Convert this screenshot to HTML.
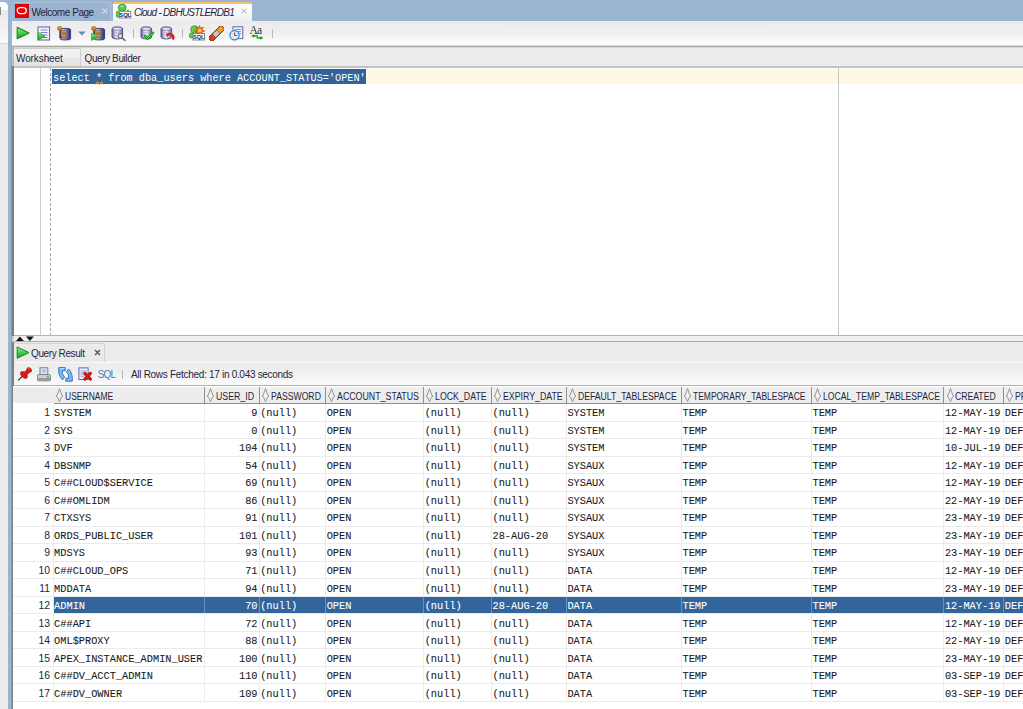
<!DOCTYPE html>
<html><head><meta charset="utf-8">
<style>
*{box-sizing:border-box;margin:0;padding:0}
html,body{width:1023px;height:709px;overflow:hidden;background:#9bb4d1;font-family:"Liberation Sans",sans-serif;position:relative}
.abs{position:absolute}
#leftp{left:0;top:2px;width:8px;height:707px;background:#ececec;border-top-right-radius:5px}
#leftp .hi{left:0;top:0;width:8px;height:42px;background:linear-gradient(#fefefe 0,#fefefe 19%,#e9e9e9 20%,#f9f9f9 97%,#d8d8d8 97%);border-top-right-radius:5px}
#leftp .blk{left:0;top:5px;width:1px;height:8px;background:#8a8a8a}
#main{left:12px;top:21px;width:1011px;height:688px;background:#ececec}
/* tabs */
#tabw{left:12px;top:2px;width:99px;height:19px;background:#9ab3d0;border:1px solid #aec2da;border-bottom:none;border-radius:2px 2px 0 0}
#tabc{left:113px;top:2px;width:139px;height:19px;background:linear-gradient(#fefefe 0,#f8f8f8 50%,#efefef 100%);border-top:2px solid #f8c06a;border-radius:2px 2px 0 0}
.tt{font-size:10px;color:#1e2540;white-space:nowrap;line-height:12px}
/* toolbar */
#tb{left:12px;top:21px;width:1011px;height:25px;background:linear-gradient(#ebebeb 0%,#efefef 45%,#fafafa 85%,#fcfcfc 100%)}
#tbl{left:12px;top:45px;width:1011px;height:3px;background:linear-gradient(#dcdcdc 0,#dcdcdc 33.3%,#a8a8a8 33.3%,#a8a8a8 66.6%,#d6d6d6 66.6%)}
.sep{width:1px;height:9px;background:#b8b8b8;top:29px}
/* worksheet tabs */
#tabws{left:13px;top:48px;width:68px;height:18px;background:linear-gradient(#f2f2f2 0,#f0f0f0 50%,#e6e6e6 51%,#e3e3e3 100%);border:1px solid #d0d0d0;border-bottom:none;border-radius:2px 2px 0 0}
#edtop{left:13px;top:66px;width:1010px;height:2px;background:#c2c2c2}
#editor{left:13px;top:68px;width:1010px;height:267px;background:#fff}
#gline{left:40px;top:68px;width:1px;height:267px;background:#cdcdcd}
#dline{left:50px;top:68px;width:1px;height:267px;background:repeating-linear-gradient(#a8a8a8 0 3px,transparent 3px 5px)}
#curline{left:51px;top:69px;width:972px;height:15px;background:#fef7e2}
#sel{left:52px;top:69px;width:314px;height:15px;background:#30649b}
#margin{left:838px;top:68px;width:1px;height:267px;background:#c8c8c8}
.code{font-family:"Liberation Mono",monospace;font-size:10.22px;white-space:pre;color:#fff;line-height:15px}
#leftborder{left:11px;top:66px;width:3px;height:643px;background:linear-gradient(90deg,#949494 0,#949494 33%,#828282 33%,#7c7c7c 100%)}
#leftborder2{left:11px;top:47px;width:3px;height:19px;background:linear-gradient(90deg,#a8a8a8 0,#a8a8a8 33%,#bdbdbd 33%)}
#leftborder0{left:11px;top:21px;width:1px;height:26px;background:#a9b4c2}
#leftborder3{left:11px;top:336px;width:3px;height:6px;background:linear-gradient(90deg,#a0a0a0 0,#a0a0a0 33%,#cfcfcf 33%)}
#edbot{left:13px;top:335px;width:1010px;height:1px;background:#b4b4b4}
#split{left:13px;top:336px;width:1010px;height:5px;background:#f0f0f0}
#splitl{left:13px;top:341px;width:1010px;height:1px;background:#a9a9a9}
#qrtab{left:13px;top:343px;width:92px;height:19px;background:linear-gradient(#ebebeb,#e9e9e9);border:1px solid #d4d4d4;border-bottom:none;border-left:none;border-radius:0 2px 0 0}
#rtb{left:13px;top:362px;width:1010px;height:23px;background:linear-gradient(#ececec 0%,#efefef 40%,#f8f8f8 85%,#fafafa 100%);border-top:1px solid #fbfbfb}
#rtbl{left:13px;top:385px;width:1010px;height:2px;background:linear-gradient(#b4b4b4 0,#b4b4b4 50%,#a2a2a2 50%)}
/* grid */
#grid{left:13px;top:386px;width:1010px;height:323px;background:#fff}
#ghead{left:13px;top:387px;width:1010px;height:16px;background:linear-gradient(#f3f3f3 0,#eeeeee 15%,#ececec 100%)}
#ghead2{left:13px;top:387px;width:41px;height:16px;background:#ececec}
.hsep{top:387px;width:1px;height:17px;background:#8f8f8f}
.hbot{top:403px;height:1px;background:#8f8f8f}
.sorti{top:388px}
.htxt{top:391px;font-size:10px;line-height:12px;color:#1e2540;white-space:nowrap;transform:scaleX(0.845);transform-origin:0 0}
.rline{left:13px;width:1010px;height:1px;background:#ebebeb}
.vline{top:404px;width:1px;height:298px;background:#ebebeb}
.selrow{left:54px;width:969px;background:#31659c}
.selv{width:1px;background:#6d8fb5}
.cell{font-family:"Liberation Mono",monospace;font-size:10.3px;line-height:15px;white-space:pre;color:#1a1a1a;-webkit-text-stroke:0.08px currentColor}
.cell.sel{color:#fff}
.rnum{left:13px;width:37px;text-align:right;font-size:10.4px;line-height:15px;color:#1e2540;margin-top:-1px}

</style></head><body>
<div class="abs" id="leftp"><div class="abs hi"></div><div class="abs blk"></div></div>
<div class="abs" id="main"></div>
<div class="abs" id="tabw"></div>
<div class="abs" id="tabc"></div>
<div class="abs" id="tb"></div>
<div class="abs" id="tbl"></div>
<div class="abs" id="tabws"></div>
<div class="abs" id="edtop"></div>
<div class="abs" id="editor"></div>
<div class="abs" id="curline"></div>
<div class="abs" id="gline"></div>
<div class="abs" id="dline"></div>
<div class="abs" id="margin"></div>
<div class="abs" id="sel"></div>
<div class="abs code" style="left:53px;top:70.5px">select * from dba_users where ACCOUNT_STATUS='OPEN'</div>
<svg class="abs" id="squiggle" style="left:95px;top:81px" width="9" height="4" viewBox="0 0 9 4"><path d="M0.5 3.5 L2.5 1 L4.5 3.5 L6.5 1 L8.5 3.5" stroke="#e8901c" stroke-width="1.2" fill="none"/></svg>
<div class="abs" id="edbot"></div>
<div class="abs" id="split"></div>
<div class="abs" id="splitl"></div>
<div class="abs" id="qrtab"></div>
<div class="abs" id="rtb"></div>
<div class="abs" id="rtbl"></div>
<div class="abs" id="leftborder"></div>
<div class="abs" id="leftborder2"></div>
<div class="abs" id="leftborder0"></div>
<div class="abs" id="leftborder3"></div>
<!-- tab texts -->
<div class="abs tt" style="left:31.5px;top:7px;letter-spacing:-0.45px">Welcome Page</div>
<svg class="abs" style="left:101.5px;top:8px" width="6" height="6" viewBox="0 0 6 6"><path d="M0.6 0.6 L5.4 5.4 M5.4 0.6 L0.6 5.4" stroke="#d6e0ec" stroke-width="1.1"/></svg>
<div class="abs tt" style="left:134px;top:7px;font-style:italic;letter-spacing:-0.75px">Cloud - DBHUSTLERDB1</div>
<svg class="abs" style="left:241px;top:8px" width="6" height="6" viewBox="0 0 6 6"><path d="M0.6 0.6 L5.4 5.4 M5.4 0.6 L0.6 5.4" stroke="#c0c0c0" stroke-width="1.1"/></svg>
<div class="abs tt" style="left:16px;top:53px;letter-spacing:-0.1px">Worksheet</div>
<div class="abs tt" style="left:84.5px;top:53px;letter-spacing:-0.4px">Query Builder</div>
<div class="abs tt" style="left:31px;top:348px;letter-spacing:-0.4px">Query Result</div>
<svg class="abs" style="left:93.5px;top:349px" width="7" height="7" viewBox="0 0 7 7"><path d="M1 1 L6 6 M6 1 L1 6" stroke="#555" stroke-width="1.4"/></svg>
<div class="abs tt" style="left:97.8px;top:369px;color:#4a7dc0;letter-spacing:-0.9px">SQL</div>
<div class="abs sep" style="left:122px;top:370px;height:9px"></div>
<div class="abs tt" style="left:131px;top:369px;letter-spacing:-0.3px">All Rows Fetched: 17 in 0.043 seconds</div>
<!-- toolbar separators -->
<div class="abs sep" style="left:133px"></div>
<div class="abs sep" style="left:182px"></div>
<div class="abs sep" style="left:272px"></div>
<!-- splitter arrows -->
<svg class="abs" style="left:15px;top:336px" width="20" height="6" viewBox="0 0 20 6"><path d="M1 5 L4.9 0.6 L8.8 5 Z" fill="#111"/><path d="M11 0.6 L18.8 0.6 L14.9 5 Z" fill="#111"/></svg>
<svg width="0" height="0" style="position:absolute"><defs>
<linearGradient id="gpl" x1="0" y1="0" x2="0" y2="1"><stop offset="0" stop-color="#9af09a"/><stop offset="0.5" stop-color="#45cc45"/><stop offset="1" stop-color="#1c9e1c"/></linearGradient>
<linearGradient id="gcyl" x1="0" y1="0" x2="1" y2="0"><stop offset="0" stop-color="#50538f"/><stop offset="0.3" stop-color="#c9cbe0"/><stop offset="0.55" stop-color="#e8e9f2"/><stop offset="1" stop-color="#5b5d99"/></linearGradient>
<linearGradient id="gcyld" x1="0" y1="0" x2="1" y2="0"><stop offset="0" stop-color="#5a60a0"/><stop offset="0.3" stop-color="#c4c8e6"/><stop offset="0.6" stop-color="#7078b8"/><stop offset="1" stop-color="#262a68"/></linearGradient>
<linearGradient id="gor" x1="0" y1="0" x2="0" y2="1"><stop offset="0" stop-color="#f0a860"/><stop offset="1" stop-color="#b86a28"/></linearGradient>
</defs></svg>
<!-- oracle tab icon -->
<svg class="abs" style="left:15px;top:4px" width="14" height="14" viewBox="0 0 14 14"><rect x="0" y="0" width="13.5" height="13.5" fill="#e8000c"/><rect x="0" y="0" width="13.5" height="13.5" fill="none" stroke="#c00008" stroke-width="0.8"/><rect x="2.3" y="3.6" width="9" height="6" rx="3" ry="3" fill="none" stroke="#fff6e8" stroke-width="1.3"/></svg>
<!-- cloud tab sql icon -->
<svg class="abs" style="left:116px;top:4px" width="16" height="15" viewBox="0 0 16 15"><ellipse cx="6.2" cy="3.7" rx="4" ry="3.5" fill="#56cc46" stroke="#2a9622" stroke-width="0.8"/><ellipse cx="6" cy="2.5" rx="1.8" ry="0.8" fill="#b8ecb0"/><circle cx="12" cy="6.5" r="1.1" fill="#3cb834"/><ellipse cx="2" cy="10.2" rx="1.8" ry="3.3" fill="#56cc46" stroke="#2a9622" stroke-width="0.7"/><rect x="3.6" y="7.4" width="11.2" height="6.6" fill="#fbfbfb" stroke="#8a8a8a" stroke-width="1"/><text x="9.2" y="12.9" font-family="Liberation Sans" font-size="6" font-weight="bold" fill="#1a2468" text-anchor="middle" letter-spacing="-0.2">SQL</text></svg>
<!-- toolbar icons -->
<svg class="abs" style="left:15.5px;top:26px" width="14" height="14" viewBox="0 0 14 14"><path d="M1.2 1.2 L13 7 L1.2 12.8 Z" fill="url(#gpl)" stroke="#16861a" stroke-width="1.1" stroke-linejoin="round"/></svg>
<svg class="abs" style="left:37px;top:25.5px" width="14" height="15" viewBox="0 0 14 15"><rect x="1" y="1" width="11.5" height="13" fill="#f4f4fb" stroke="#656ab0" stroke-width="1.1"/><path d="M3.5 4 H10.5 M3.5 6.5 H10.5 M3.5 9 H10.5 M3.5 11.5 H10.5" stroke="#6e78c8" stroke-width="0.9"/><path d="M1.2 6.5 L8 10.2 L1.2 14 Z" fill="url(#gpl)" stroke="#1a9a1a" stroke-width="0.8"/></svg>
<svg class="abs" style="left:56.5px;top:25.5px" width="16" height="15" viewBox="0 0 16 15"><path d="M3 3.6 Q3 2.3 8.3 2.3 Q13.6 2.3 13.6 3.6 V12.7 Q13.6 14 8.3 14 Q3 14 3 12.7 Z" fill="url(#gcyld)" stroke="#2a2c68" stroke-width="0.8"/><path d="M3 4 V11.5 H5" stroke="#333" stroke-width="0.9" fill="none"/><rect x="0.6" y="0.6" width="4.2" height="3.7" rx="1.2" fill="url(#gor)" stroke="#9a5a22" stroke-width="0.6"/><rect x="4.7" y="4.4" width="4.7" height="3" rx="1.2" fill="url(#gor)" stroke="#9a5a22" stroke-width="0.6"/><rect x="4.7" y="8.5" width="4.7" height="3.6" rx="1.2" fill="url(#gor)" stroke="#9a5a22" stroke-width="0.6"/></svg>
<svg class="abs" style="left:77.5px;top:30.5px" width="8" height="5" viewBox="0 0 8 5"><path d="M0.3 0.5 H7.5 L3.9 4.6 Z" fill="#5a8cc8"/></svg>
<svg class="abs" style="left:90.5px;top:25.5px" width="16" height="15" viewBox="0 0 16 15"><path d="M3 3.6 Q3 2.3 8.3 2.3 Q13.6 2.3 13.6 3.6 V12.7 Q13.6 14 8.3 14 Q3 14 3 12.7 Z" fill="url(#gcyld)" stroke="#2a2c68" stroke-width="0.8"/><path d="M3 4 V11.5 H5" stroke="#333" stroke-width="0.9" fill="none"/><rect x="0.6" y="0.6" width="4.2" height="3.7" rx="1.2" fill="url(#gor)" stroke="#9a5a22" stroke-width="0.6"/><rect x="4.7" y="4.4" width="4.7" height="3" rx="1.2" fill="url(#gor)" stroke="#9a5a22" stroke-width="0.6"/><rect x="4.7" y="8.5" width="4.7" height="3.6" rx="1.2" fill="url(#gor)" stroke="#9a5a22" stroke-width="0.6"/><path d="M0.5 7 L7.5 10.5 L0.5 14.5 Z" fill="url(#gpl)" stroke="#22a022" stroke-width="0.6"/></svg>
<svg class="abs" style="left:110.5px;top:25.5px" width="16" height="15" viewBox="0 0 16 15"><path d="M1 2.8 Q1 0.8 6.3 0.8 Q11.6 0.8 11.6 2.8 V11 Q11.6 13 6.3 13 Q1 13 1 11 Z" fill="url(#gcyl)" stroke="#4a4c8c" stroke-width="0.9"/><ellipse cx="6.3" cy="2.8" rx="4.6" ry="1.4" fill="#e4e6f2" stroke="#6a6ca8" stroke-width="0.6"/><path d="M1.5 6 Q6.3 7.5 11.1 6 M1.5 9 Q6.3 10.5 11.1 9" stroke="#a8aad0" stroke-width="0.6" fill="none"/><circle cx="9.3" cy="10" r="2.3" fill="#e0e0e0" stroke="#555" stroke-width="1"/><path d="M10.8 11.6 L14 14.3" stroke="#666" stroke-width="1.6" stroke-linecap="round"/></svg>
<svg class="abs" style="left:139.5px;top:25.5px" width="16" height="15" viewBox="0 0 16 15"><path d="M1 2.8 Q1 0.8 6.3 0.8 Q11.6 0.8 11.6 2.8 V11 Q11.6 13 6.3 13 Q1 13 1 11 Z" fill="url(#gcyl)" stroke="#4a4c8c" stroke-width="0.9"/><ellipse cx="6.3" cy="2.8" rx="4.6" ry="1.4" fill="#e4e6f2" stroke="#6a6ca8" stroke-width="0.6"/><path d="M1.5 6 Q6.3 7.5 11.1 6" stroke="#a8aad0" stroke-width="0.6" fill="none"/><path d="M5 10 L7.5 12.6 L13 6.8" stroke="#129a12" stroke-width="2.6" fill="none" stroke-linecap="round" stroke-linejoin="round"/><path d="M5 10 L7.5 12.6 L13 6.8" stroke="#58e058" stroke-width="1" fill="none" stroke-linecap="round"/></svg>
<svg class="abs" style="left:159.5px;top:25.5px" width="16" height="15" viewBox="0 0 16 15"><path d="M1 2.8 Q1 0.8 6.3 0.8 Q11.6 0.8 11.6 2.8 V11 Q11.6 13 6.3 13 Q1 13 1 11 Z" fill="url(#gcyl)" stroke="#4a4c8c" stroke-width="0.9"/><ellipse cx="6.3" cy="2.8" rx="4.6" ry="1.4" fill="#e4e6f2" stroke="#6a6ca8" stroke-width="0.6"/><path d="M1.5 6 Q6.3 7.5 11.1 6" stroke="#a8aad0" stroke-width="0.6" fill="none"/><path d="M7 9.5 Q9.5 6.5 12.5 9 Q14.5 11 12.5 13.5" stroke="#d82010" stroke-width="2.2" fill="none"/><path d="M5.8 7.8 L9.5 8 L7.2 11.2 Z" fill="#e02010"/></svg>
<svg class="abs" style="left:188.5px;top:25px" width="17" height="16" viewBox="0 0 17 16"><circle cx="5.5" cy="4.5" r="3.8" fill="#5fcf4a" stroke="#2f9a25" stroke-width="0.8"/><circle cx="2.8" cy="10.5" r="2.6" fill="#5fcf4a" stroke="#2f9a25" stroke-width="0.8"/><path d="M10.5 0.5 L11.5 3 L14.5 2 L13 4.8 L15.8 6 L13 7 L14 9.5 L11.5 8.3 L10.5 10.5 L9.5 8.3 L7 9.5 L8 7 L5.5 6 L8 4.8 L6.8 2 L9.5 3 Z" fill="#f07a20" stroke="#c03010" stroke-width="0.5"/><circle cx="10.8" cy="5.5" r="1.6" fill="#ffe060"/><rect x="4" y="8.5" width="11.5" height="6.5" fill="#f8f8f8" stroke="#7a7a7a" stroke-width="0.9"/><text x="9.7" y="14.2" font-family="Liberation Sans" font-size="5.6" font-weight="bold" fill="#1e2a70" text-anchor="middle">SQL</text></svg>
<svg class="abs" style="left:209px;top:25.5px" width="15" height="15" viewBox="0 0 15 15"><g transform="rotate(-45 7.5 7.5)"><rect x="-1.5" y="4.8" width="18" height="5.4" rx="1" fill="#8a8a8a" stroke="#7a3c18" stroke-width="0.9"/><rect x="-1.5" y="4.8" width="6" height="5.4" fill="#d8401a"/><rect x="4.5" y="5.3" width="5" height="4.4" fill="#c8c8c8"/><rect x="10.5" y="4.8" width="6" height="5.4" fill="#f0a020"/><rect x="-1.5" y="4.8" width="18" height="5.4" rx="1" fill="none" stroke="#7a3c18" stroke-width="0.9"/></g></svg>
<svg class="abs" style="left:229px;top:25.5px" width="15" height="15" viewBox="0 0 15 15"><rect x="4" y="0.8" width="9.8" height="11.8" fill="#f2f2fa" stroke="#6066b0" stroke-width="1"/><path d="M6 3.5 H12 M6 5.5 H12 M6 7.5 H12" stroke="#8088cc" stroke-width="0.9"/><circle cx="5.5" cy="9.3" r="4.6" fill="#d6ecfb" stroke="#3a86d6" stroke-width="1.3"/><path d="M5.5 6.5 V9.5 H7.8" stroke="#b02020" stroke-width="0.9" fill="none"/></svg>
<svg class="abs" style="left:249px;top:24px" width="16" height="17" viewBox="0 0 16 17"><text x="0.6" y="9.8" font-family="Liberation Serif" font-size="11.5" fill="#303030" letter-spacing="-0.8">Aa</text><path d="M4 11.9 H9" stroke="#14a014" stroke-width="1.5"/><path d="M2.3 11.9 L5.2 10 V13.8 Z" fill="#14a014"/><path d="M7.5 13.9 H12.5" stroke="#14a014" stroke-width="1.5"/><path d="M14.3 13.9 L11.4 12 V15.8 Z" fill="#14a014"/></svg>
<!-- query result tab play -->
<svg class="abs" style="left:15.5px;top:346px" width="14" height="13" viewBox="0 0 14 13"><path d="M1.2 1 L13 6.6 L1.2 12.2 Z" fill="url(#gpl)" stroke="#16861a" stroke-width="1" stroke-linejoin="round"/></svg>
<!-- result toolbar icons -->
<svg class="abs" style="left:17px;top:366px" width="16" height="16" viewBox="0 0 16 16"><path d="M1.5 14 L5.5 10.3" stroke="#4a4a4a" stroke-width="1.3" stroke-linecap="round"/><path d="M3.5 6.5 Q5.5 4.8 7.5 6 L10 3.5 Q9.8 1.8 11.5 1.5 Q14.8 2 14.5 5 Q14 6.5 12.5 6.2 L10 8.8 Q11 10.8 9.5 12.3 Q7.5 13 5.5 11 Q3 8.8 3.5 6.5 Z" fill="#dc1a12" stroke="#9a0c08" stroke-width="0.7"/><path d="M11 2.5 Q13 2.3 13.2 3.5" stroke="#f07050" stroke-width="0.8" fill="none"/></svg>
<svg class="abs" style="left:37px;top:366.5px" width="15" height="15" viewBox="0 0 15 15"><rect x="3" y="0.8" width="7.8" height="7.2" fill="#eceef8" stroke="#6878b8" stroke-width="1"/><path d="M4.6 3 H9.2 M4.6 5 H9.2" stroke="#8a94d4" stroke-width="0.9"/><path d="M1.8 7.5 H12.2 Q13.6 7.5 13.6 9.3 V12.6 Q13.6 13.8 12.4 13.8 H1.6 Q0.4 13.8 0.4 12.6 V9.3 Q0.4 7.5 1.8 7.5 Z" fill="#cfcfcf" stroke="#6c6c6c" stroke-width="0.8"/><rect x="1" y="11" width="12" height="2.3" fill="#9a9a9a"/><rect x="9.8" y="9.3" width="2.3" height="1.3" fill="#28c028"/></svg>
<svg class="abs" style="left:57.5px;top:366.5px" width="15" height="15" viewBox="0 0 15 15"><path d="M0.7 0.6 H7.2 V3.6 H4.2 Q3.6 7.2 6.6 10.2 L4.4 12.8 Q0 8.5 0.7 0.6 Z" fill="#78bcf0" stroke="#2a68bc" stroke-width="0.9" stroke-linejoin="round"/><path d="M14.3 14.2 H7.8 V11.2 H10.8 Q11.4 7.6 8.4 4.6 L10.6 2 Q15 6.3 14.3 14.2 Z" fill="#78bcf0" stroke="#2a68bc" stroke-width="0.9" stroke-linejoin="round"/><path d="M1.8 1.6 H6.2" stroke="#c8e6fc" stroke-width="0.8"/></svg>
<svg class="abs" style="left:77.5px;top:366.5px" width="15" height="15" viewBox="0 0 15 15"><rect x="0.9" y="0.9" width="9.2" height="11.6" fill="#f2f2fa" stroke="#6066b0" stroke-width="1"/><path d="M2.5 3.8 H8.5 M2.5 5.8 H8.5 M2.5 7.8 H8.5 M2.5 9.8 H6" stroke="#8088cc" stroke-width="0.8"/><path d="M7 6.5 L12.3 12 M12.3 6.5 L7 12" stroke="#9a0808" stroke-width="3.2" stroke-linecap="round"/><path d="M7 6.5 L12.3 12 M12.3 6.5 L7 12" stroke="#f01818" stroke-width="1.8" stroke-linecap="round"/></svg>
<div class="abs" id="grid"></div>
<div class="abs" id="ghead"></div>
<div class="abs" id="ghead2"></div>
<div class="abs hsep" style="left:204px"></div>
<div class="abs hbot" style="left:54px;width:150px"></div>
<svg class="abs sorti" style="left:55.1px" width="9" height="15" viewBox="-1 0 9 15"><path d="M3.5 0.6 L5.8 7.2 L7 8.1 L5.6 8.8 L3.5 13.6 L1.4 8.8 L0 8.1 L1.2 7.2 Z" fill="#f2f2f2" stroke="#8c8c8c" stroke-width="0.9" stroke-linejoin="round"/></svg>
<div class="abs htxt" style="left:64.8px;transform:scaleX(0.852)">USERNAME</div>
<div class="abs hsep" style="left:259px"></div>
<div class="abs hbot" style="left:205px;width:54px"></div>
<svg class="abs sorti" style="left:206.1px" width="9" height="15" viewBox="-1 0 9 15"><path d="M3.5 0.6 L5.8 7.2 L7 8.1 L5.6 8.8 L3.5 13.6 L1.4 8.8 L0 8.1 L1.2 7.2 Z" fill="#f2f2f2" stroke="#8c8c8c" stroke-width="0.9" stroke-linejoin="round"/></svg>
<div class="abs htxt" style="left:215.8px;transform:scaleX(0.876)">USER_ID</div>
<div class="abs hsep" style="left:325px"></div>
<div class="abs hbot" style="left:260px;width:65px"></div>
<svg class="abs sorti" style="left:260.8px" width="9" height="15" viewBox="-1 0 9 15"><path d="M3.5 0.6 L5.8 7.2 L7 8.1 L5.6 8.8 L3.5 13.6 L1.4 8.8 L0 8.1 L1.2 7.2 Z" fill="#f2f2f2" stroke="#8c8c8c" stroke-width="0.9" stroke-linejoin="round"/></svg>
<div class="abs htxt" style="left:270.5px;transform:scaleX(0.866)">PASSWORD</div>
<div class="abs hsep" style="left:423px"></div>
<div class="abs hbot" style="left:326px;width:97px"></div>
<svg class="abs sorti" style="left:327.3px" width="9" height="15" viewBox="-1 0 9 15"><path d="M3.5 0.6 L5.8 7.2 L7 8.1 L5.6 8.8 L3.5 13.6 L1.4 8.8 L0 8.1 L1.2 7.2 Z" fill="#f2f2f2" stroke="#8c8c8c" stroke-width="0.9" stroke-linejoin="round"/></svg>
<div class="abs htxt" style="left:337.0px;transform:scaleX(0.882)">ACCOUNT_STATUS</div>
<div class="abs hsep" style="left:491px"></div>
<div class="abs hbot" style="left:424px;width:67px"></div>
<svg class="abs sorti" style="left:425.3px" width="9" height="15" viewBox="-1 0 9 15"><path d="M3.5 0.6 L5.8 7.2 L7 8.1 L5.6 8.8 L3.5 13.6 L1.4 8.8 L0 8.1 L1.2 7.2 Z" fill="#f2f2f2" stroke="#8c8c8c" stroke-width="0.9" stroke-linejoin="round"/></svg>
<div class="abs htxt" style="left:435.0px;transform:scaleX(0.879)">LOCK_DATE</div>
<div class="abs hsep" style="left:566px"></div>
<div class="abs hbot" style="left:492px;width:74px"></div>
<svg class="abs sorti" style="left:493.1px" width="9" height="15" viewBox="-1 0 9 15"><path d="M3.5 0.6 L5.8 7.2 L7 8.1 L5.6 8.8 L3.5 13.6 L1.4 8.8 L0 8.1 L1.2 7.2 Z" fill="#f2f2f2" stroke="#8c8c8c" stroke-width="0.9" stroke-linejoin="round"/></svg>
<div class="abs htxt" style="left:502.8px;transform:scaleX(0.878)">EXPIRY_DATE</div>
<div class="abs hsep" style="left:681px"></div>
<div class="abs hbot" style="left:567px;width:114px"></div>
<svg class="abs sorti" style="left:568.0px" width="9" height="15" viewBox="-1 0 9 15"><path d="M3.5 0.6 L5.8 7.2 L7 8.1 L5.6 8.8 L3.5 13.6 L1.4 8.8 L0 8.1 L1.2 7.2 Z" fill="#f2f2f2" stroke="#8c8c8c" stroke-width="0.9" stroke-linejoin="round"/></svg>
<div class="abs htxt" style="left:577.7px;transform:scaleX(0.866)">DEFAULT_TABLESPACE</div>
<div class="abs hsep" style="left:811px"></div>
<div class="abs hbot" style="left:682px;width:129px"></div>
<svg class="abs sorti" style="left:683.1px" width="9" height="15" viewBox="-1 0 9 15"><path d="M3.5 0.6 L5.8 7.2 L7 8.1 L5.6 8.8 L3.5 13.6 L1.4 8.8 L0 8.1 L1.2 7.2 Z" fill="#f2f2f2" stroke="#8c8c8c" stroke-width="0.9" stroke-linejoin="round"/></svg>
<div class="abs htxt" style="left:692.8px;transform:scaleX(0.847)">TEMPORARY_TABLESPACE</div>
<div class="abs hsep" style="left:943px"></div>
<div class="abs hbot" style="left:812px;width:131px"></div>
<svg class="abs sorti" style="left:813.1px" width="9" height="15" viewBox="-1 0 9 15"><path d="M3.5 0.6 L5.8 7.2 L7 8.1 L5.6 8.8 L3.5 13.6 L1.4 8.8 L0 8.1 L1.2 7.2 Z" fill="#f2f2f2" stroke="#8c8c8c" stroke-width="0.9" stroke-linejoin="round"/></svg>
<div class="abs htxt" style="left:822.8px;transform:scaleX(0.861)">LOCAL_TEMP_TABLESPACE</div>
<div class="abs hsep" style="left:1003px"></div>
<div class="abs hbot" style="left:944px;width:59px"></div>
<svg class="abs sorti" style="left:945.5px" width="9" height="15" viewBox="-1 0 9 15"><path d="M3.5 0.6 L5.8 7.2 L7 8.1 L5.6 8.8 L3.5 13.6 L1.4 8.8 L0 8.1 L1.2 7.2 Z" fill="#f2f2f2" stroke="#8c8c8c" stroke-width="0.9" stroke-linejoin="round"/></svg>
<div class="abs htxt" style="left:955.2px;transform:scaleX(0.864)">CREATED</div>
<div class="abs hsep" style="left:1100px"></div>
<div class="abs hbot" style="left:1004px;width:96px"></div>
<svg class="abs sorti" style="left:1005.4px" width="9" height="15" viewBox="-1 0 9 15"><path d="M3.5 0.6 L5.8 7.2 L7 8.1 L5.6 8.8 L3.5 13.6 L1.4 8.8 L0 8.1 L1.2 7.2 Z" fill="#f2f2f2" stroke="#8c8c8c" stroke-width="0.9" stroke-linejoin="round"/></svg>
<div class="abs htxt" style="left:1015.1px;transform:scaleX(0.855)">PROFILE</div>
<div class="abs rline" style="top:421px"></div>
<div class="abs rline" style="top:438px"></div>
<div class="abs rline" style="top:456px"></div>
<div class="abs rline" style="top:473px"></div>
<div class="abs rline" style="top:491px"></div>
<div class="abs rline" style="top:508px"></div>
<div class="abs rline" style="top:526px"></div>
<div class="abs rline" style="top:543px"></div>
<div class="abs rline" style="top:561px"></div>
<div class="abs rline" style="top:578px"></div>
<div class="abs rline" style="top:596px"></div>
<div class="abs rline" style="top:613px"></div>
<div class="abs rline" style="top:631px"></div>
<div class="abs rline" style="top:648px"></div>
<div class="abs rline" style="top:666px"></div>
<div class="abs rline" style="top:683px"></div>
<div class="abs rline" style="top:701px"></div>
<div class="abs vline" style="left:53px"></div>
<div class="abs vline" style="left:204px"></div>
<div class="abs vline" style="left:259px"></div>
<div class="abs vline" style="left:325px"></div>
<div class="abs vline" style="left:423px"></div>
<div class="abs vline" style="left:491px"></div>
<div class="abs vline" style="left:566px"></div>
<div class="abs vline" style="left:681px"></div>
<div class="abs vline" style="left:811px"></div>
<div class="abs vline" style="left:943px"></div>
<div class="abs vline" style="left:1003px"></div>
<div class="abs selrow" style="top:597px;height:16px"></div>
<div class="abs selv" style="left:204px;top:597px;height:16px"></div>
<div class="abs selv" style="left:259px;top:597px;height:16px"></div>
<div class="abs selv" style="left:325px;top:597px;height:16px"></div>
<div class="abs selv" style="left:423px;top:597px;height:16px"></div>
<div class="abs selv" style="left:491px;top:597px;height:16px"></div>
<div class="abs selv" style="left:566px;top:597px;height:16px"></div>
<div class="abs selv" style="left:681px;top:597px;height:16px"></div>
<div class="abs selv" style="left:811px;top:597px;height:16px"></div>
<div class="abs selv" style="left:943px;top:597px;height:16px"></div>
<div class="abs selv" style="left:1003px;top:597px;height:16px"></div>
<div class="abs rnum" style="top:406px">1</div>
<div class="abs cell" style="top:406px;left:54.1px">SYSTEM</div>
<div class="abs cell" style="top:406px;left:204px;width:53.5px;text-align:right">9</div>
<div class="abs cell" style="top:406px;left:260.2px">(null)</div>
<div class="abs cell" style="top:406px;left:326.7px">OPEN</div>
<div class="abs cell" style="top:406px;left:424.7px">(null)</div>
<div class="abs cell" style="top:406px;left:492.5px">(null)</div>
<div class="abs cell" style="top:406px;left:567.4px">SYSTEM</div>
<div class="abs cell" style="top:406px;left:682.5px">TEMP</div>
<div class="abs cell" style="top:406px;left:812.5px">TEMP</div>
<div class="abs cell" style="top:406px;left:944.9px">12-MAY-19</div>
<div class="abs cell" style="top:406px;left:1004.8px">DEFAULT</div>
<div class="abs rnum" style="top:424px">2</div>
<div class="abs cell" style="top:424px;left:54.1px">SYS</div>
<div class="abs cell" style="top:424px;left:204px;width:53.5px;text-align:right">0</div>
<div class="abs cell" style="top:424px;left:260.2px">(null)</div>
<div class="abs cell" style="top:424px;left:326.7px">OPEN</div>
<div class="abs cell" style="top:424px;left:424.7px">(null)</div>
<div class="abs cell" style="top:424px;left:492.5px">(null)</div>
<div class="abs cell" style="top:424px;left:567.4px">SYSTEM</div>
<div class="abs cell" style="top:424px;left:682.5px">TEMP</div>
<div class="abs cell" style="top:424px;left:812.5px">TEMP</div>
<div class="abs cell" style="top:424px;left:944.9px">12-MAY-19</div>
<div class="abs cell" style="top:424px;left:1004.8px">DEFAULT</div>
<div class="abs rnum" style="top:441px">3</div>
<div class="abs cell" style="top:441px;left:54.1px">DVF</div>
<div class="abs cell" style="top:441px;left:204px;width:53.5px;text-align:right">104</div>
<div class="abs cell" style="top:441px;left:260.2px">(null)</div>
<div class="abs cell" style="top:441px;left:326.7px">OPEN</div>
<div class="abs cell" style="top:441px;left:424.7px">(null)</div>
<div class="abs cell" style="top:441px;left:492.5px">(null)</div>
<div class="abs cell" style="top:441px;left:567.4px">SYSTEM</div>
<div class="abs cell" style="top:441px;left:682.5px">TEMP</div>
<div class="abs cell" style="top:441px;left:812.5px">TEMP</div>
<div class="abs cell" style="top:441px;left:944.9px">10-JUL-19</div>
<div class="abs cell" style="top:441px;left:1004.8px">DEFAULT</div>
<div class="abs rnum" style="top:459px">4</div>
<div class="abs cell" style="top:459px;left:54.1px">DBSNMP</div>
<div class="abs cell" style="top:459px;left:204px;width:53.5px;text-align:right">54</div>
<div class="abs cell" style="top:459px;left:260.2px">(null)</div>
<div class="abs cell" style="top:459px;left:326.7px">OPEN</div>
<div class="abs cell" style="top:459px;left:424.7px">(null)</div>
<div class="abs cell" style="top:459px;left:492.5px">(null)</div>
<div class="abs cell" style="top:459px;left:567.4px">SYSAUX</div>
<div class="abs cell" style="top:459px;left:682.5px">TEMP</div>
<div class="abs cell" style="top:459px;left:812.5px">TEMP</div>
<div class="abs cell" style="top:459px;left:944.9px">12-MAY-19</div>
<div class="abs cell" style="top:459px;left:1004.8px">DEFAULT</div>
<div class="abs rnum" style="top:476px">5</div>
<div class="abs cell" style="top:476px;left:54.1px">C##CLOUD$SERVICE</div>
<div class="abs cell" style="top:476px;left:204px;width:53.5px;text-align:right">69</div>
<div class="abs cell" style="top:476px;left:260.2px">(null)</div>
<div class="abs cell" style="top:476px;left:326.7px">OPEN</div>
<div class="abs cell" style="top:476px;left:424.7px">(null)</div>
<div class="abs cell" style="top:476px;left:492.5px">(null)</div>
<div class="abs cell" style="top:476px;left:567.4px">SYSAUX</div>
<div class="abs cell" style="top:476px;left:682.5px">TEMP</div>
<div class="abs cell" style="top:476px;left:812.5px">TEMP</div>
<div class="abs cell" style="top:476px;left:944.9px">12-MAY-19</div>
<div class="abs cell" style="top:476px;left:1004.8px">DEFAULT</div>
<div class="abs rnum" style="top:494px">6</div>
<div class="abs cell" style="top:494px;left:54.1px">C##OMLIDM</div>
<div class="abs cell" style="top:494px;left:204px;width:53.5px;text-align:right">86</div>
<div class="abs cell" style="top:494px;left:260.2px">(null)</div>
<div class="abs cell" style="top:494px;left:326.7px">OPEN</div>
<div class="abs cell" style="top:494px;left:424.7px">(null)</div>
<div class="abs cell" style="top:494px;left:492.5px">(null)</div>
<div class="abs cell" style="top:494px;left:567.4px">SYSAUX</div>
<div class="abs cell" style="top:494px;left:682.5px">TEMP</div>
<div class="abs cell" style="top:494px;left:812.5px">TEMP</div>
<div class="abs cell" style="top:494px;left:944.9px">22-MAY-19</div>
<div class="abs cell" style="top:494px;left:1004.8px">DEFAULT</div>
<div class="abs rnum" style="top:511px">7</div>
<div class="abs cell" style="top:511px;left:54.1px">CTXSYS</div>
<div class="abs cell" style="top:511px;left:204px;width:53.5px;text-align:right">91</div>
<div class="abs cell" style="top:511px;left:260.2px">(null)</div>
<div class="abs cell" style="top:511px;left:326.7px">OPEN</div>
<div class="abs cell" style="top:511px;left:424.7px">(null)</div>
<div class="abs cell" style="top:511px;left:492.5px">(null)</div>
<div class="abs cell" style="top:511px;left:567.4px">SYSAUX</div>
<div class="abs cell" style="top:511px;left:682.5px">TEMP</div>
<div class="abs cell" style="top:511px;left:812.5px">TEMP</div>
<div class="abs cell" style="top:511px;left:944.9px">23-MAY-19</div>
<div class="abs cell" style="top:511px;left:1004.8px">DEFAULT</div>
<div class="abs rnum" style="top:529px">8</div>
<div class="abs cell" style="top:529px;left:54.1px">ORDS_PUBLIC_USER</div>
<div class="abs cell" style="top:529px;left:204px;width:53.5px;text-align:right">101</div>
<div class="abs cell" style="top:529px;left:260.2px">(null)</div>
<div class="abs cell" style="top:529px;left:326.7px">OPEN</div>
<div class="abs cell" style="top:529px;left:424.7px">(null)</div>
<div class="abs cell" style="top:529px;left:492.5px">28-AUG-20</div>
<div class="abs cell" style="top:529px;left:567.4px">SYSAUX</div>
<div class="abs cell" style="top:529px;left:682.5px">TEMP</div>
<div class="abs cell" style="top:529px;left:812.5px">TEMP</div>
<div class="abs cell" style="top:529px;left:944.9px">23-MAY-19</div>
<div class="abs cell" style="top:529px;left:1004.8px">DEFAULT</div>
<div class="abs rnum" style="top:546px">9</div>
<div class="abs cell" style="top:546px;left:54.1px">MDSYS</div>
<div class="abs cell" style="top:546px;left:204px;width:53.5px;text-align:right">93</div>
<div class="abs cell" style="top:546px;left:260.2px">(null)</div>
<div class="abs cell" style="top:546px;left:326.7px">OPEN</div>
<div class="abs cell" style="top:546px;left:424.7px">(null)</div>
<div class="abs cell" style="top:546px;left:492.5px">(null)</div>
<div class="abs cell" style="top:546px;left:567.4px">SYSAUX</div>
<div class="abs cell" style="top:546px;left:682.5px">TEMP</div>
<div class="abs cell" style="top:546px;left:812.5px">TEMP</div>
<div class="abs cell" style="top:546px;left:944.9px">23-MAY-19</div>
<div class="abs cell" style="top:546px;left:1004.8px">DEFAULT</div>
<div class="abs rnum" style="top:564px">10</div>
<div class="abs cell" style="top:564px;left:54.1px">C##CLOUD_OPS</div>
<div class="abs cell" style="top:564px;left:204px;width:53.5px;text-align:right">71</div>
<div class="abs cell" style="top:564px;left:260.2px">(null)</div>
<div class="abs cell" style="top:564px;left:326.7px">OPEN</div>
<div class="abs cell" style="top:564px;left:424.7px">(null)</div>
<div class="abs cell" style="top:564px;left:492.5px">(null)</div>
<div class="abs cell" style="top:564px;left:567.4px">DATA</div>
<div class="abs cell" style="top:564px;left:682.5px">TEMP</div>
<div class="abs cell" style="top:564px;left:812.5px">TEMP</div>
<div class="abs cell" style="top:564px;left:944.9px">12-MAY-19</div>
<div class="abs cell" style="top:564px;left:1004.8px">DEFAULT</div>
<div class="abs rnum" style="top:582px">11</div>
<div class="abs cell" style="top:582px;left:54.1px">MDDATA</div>
<div class="abs cell" style="top:582px;left:204px;width:53.5px;text-align:right">94</div>
<div class="abs cell" style="top:582px;left:260.2px">(null)</div>
<div class="abs cell" style="top:582px;left:326.7px">OPEN</div>
<div class="abs cell" style="top:582px;left:424.7px">(null)</div>
<div class="abs cell" style="top:582px;left:492.5px">(null)</div>
<div class="abs cell" style="top:582px;left:567.4px">DATA</div>
<div class="abs cell" style="top:582px;left:682.5px">TEMP</div>
<div class="abs cell" style="top:582px;left:812.5px">TEMP</div>
<div class="abs cell" style="top:582px;left:944.9px">23-MAY-19</div>
<div class="abs cell" style="top:582px;left:1004.8px">DEFAULT</div>
<div class="abs rnum" style="top:599px">12</div>
<div class="abs cell sel" style="top:599px;left:54.1px">ADMIN</div>
<div class="abs cell sel" style="top:599px;left:204px;width:53.5px;text-align:right">70</div>
<div class="abs cell sel" style="top:599px;left:260.2px">(null)</div>
<div class="abs cell sel" style="top:599px;left:326.7px">OPEN</div>
<div class="abs cell sel" style="top:599px;left:424.7px">(null)</div>
<div class="abs cell sel" style="top:599px;left:492.5px">28-AUG-20</div>
<div class="abs cell sel" style="top:599px;left:567.4px">DATA</div>
<div class="abs cell sel" style="top:599px;left:682.5px">TEMP</div>
<div class="abs cell sel" style="top:599px;left:812.5px">TEMP</div>
<div class="abs cell sel" style="top:599px;left:944.9px">12-MAY-19</div>
<div class="abs cell sel" style="top:599px;left:1004.8px">DEFAULT</div>
<div class="abs rnum" style="top:617px">13</div>
<div class="abs cell" style="top:617px;left:54.1px">C##API</div>
<div class="abs cell" style="top:617px;left:204px;width:53.5px;text-align:right">72</div>
<div class="abs cell" style="top:617px;left:260.2px">(null)</div>
<div class="abs cell" style="top:617px;left:326.7px">OPEN</div>
<div class="abs cell" style="top:617px;left:424.7px">(null)</div>
<div class="abs cell" style="top:617px;left:492.5px">(null)</div>
<div class="abs cell" style="top:617px;left:567.4px">DATA</div>
<div class="abs cell" style="top:617px;left:682.5px">TEMP</div>
<div class="abs cell" style="top:617px;left:812.5px">TEMP</div>
<div class="abs cell" style="top:617px;left:944.9px">12-MAY-19</div>
<div class="abs cell" style="top:617px;left:1004.8px">DEFAULT</div>
<div class="abs rnum" style="top:634px">14</div>
<div class="abs cell" style="top:634px;left:54.1px">OML$PROXY</div>
<div class="abs cell" style="top:634px;left:204px;width:53.5px;text-align:right">88</div>
<div class="abs cell" style="top:634px;left:260.2px">(null)</div>
<div class="abs cell" style="top:634px;left:326.7px">OPEN</div>
<div class="abs cell" style="top:634px;left:424.7px">(null)</div>
<div class="abs cell" style="top:634px;left:492.5px">(null)</div>
<div class="abs cell" style="top:634px;left:567.4px">DATA</div>
<div class="abs cell" style="top:634px;left:682.5px">TEMP</div>
<div class="abs cell" style="top:634px;left:812.5px">TEMP</div>
<div class="abs cell" style="top:634px;left:944.9px">22-MAY-19</div>
<div class="abs cell" style="top:634px;left:1004.8px">DEFAULT</div>
<div class="abs rnum" style="top:652px">15</div>
<div class="abs cell" style="top:652px;left:54.1px">APEX_INSTANCE_ADMIN_USER</div>
<div class="abs cell" style="top:652px;left:204px;width:53.5px;text-align:right">100</div>
<div class="abs cell" style="top:652px;left:260.2px">(null)</div>
<div class="abs cell" style="top:652px;left:326.7px">OPEN</div>
<div class="abs cell" style="top:652px;left:424.7px">(null)</div>
<div class="abs cell" style="top:652px;left:492.5px">(null)</div>
<div class="abs cell" style="top:652px;left:567.4px">DATA</div>
<div class="abs cell" style="top:652px;left:682.5px">TEMP</div>
<div class="abs cell" style="top:652px;left:812.5px">TEMP</div>
<div class="abs cell" style="top:652px;left:944.9px">23-MAY-19</div>
<div class="abs cell" style="top:652px;left:1004.8px">DEFAULT</div>
<div class="abs rnum" style="top:669px">16</div>
<div class="abs cell" style="top:669px;left:54.1px">C##DV_ACCT_ADMIN</div>
<div class="abs cell" style="top:669px;left:204px;width:53.5px;text-align:right">110</div>
<div class="abs cell" style="top:669px;left:260.2px">(null)</div>
<div class="abs cell" style="top:669px;left:326.7px">OPEN</div>
<div class="abs cell" style="top:669px;left:424.7px">(null)</div>
<div class="abs cell" style="top:669px;left:492.5px">(null)</div>
<div class="abs cell" style="top:669px;left:567.4px">DATA</div>
<div class="abs cell" style="top:669px;left:682.5px">TEMP</div>
<div class="abs cell" style="top:669px;left:812.5px">TEMP</div>
<div class="abs cell" style="top:669px;left:944.9px">03-SEP-19</div>
<div class="abs cell" style="top:669px;left:1004.8px">DEFAULT</div>
<div class="abs rnum" style="top:687px">17</div>
<div class="abs cell" style="top:687px;left:54.1px">C##DV_OWNER</div>
<div class="abs cell" style="top:687px;left:204px;width:53.5px;text-align:right">109</div>
<div class="abs cell" style="top:687px;left:260.2px">(null)</div>
<div class="abs cell" style="top:687px;left:326.7px">OPEN</div>
<div class="abs cell" style="top:687px;left:424.7px">(null)</div>
<div class="abs cell" style="top:687px;left:492.5px">(null)</div>
<div class="abs cell" style="top:687px;left:567.4px">DATA</div>
<div class="abs cell" style="top:687px;left:682.5px">TEMP</div>
<div class="abs cell" style="top:687px;left:812.5px">TEMP</div>
<div class="abs cell" style="top:687px;left:944.9px">03-SEP-19</div>
<div class="abs cell" style="top:687px;left:1004.8px">DEFAULT</div>
</body></html>
